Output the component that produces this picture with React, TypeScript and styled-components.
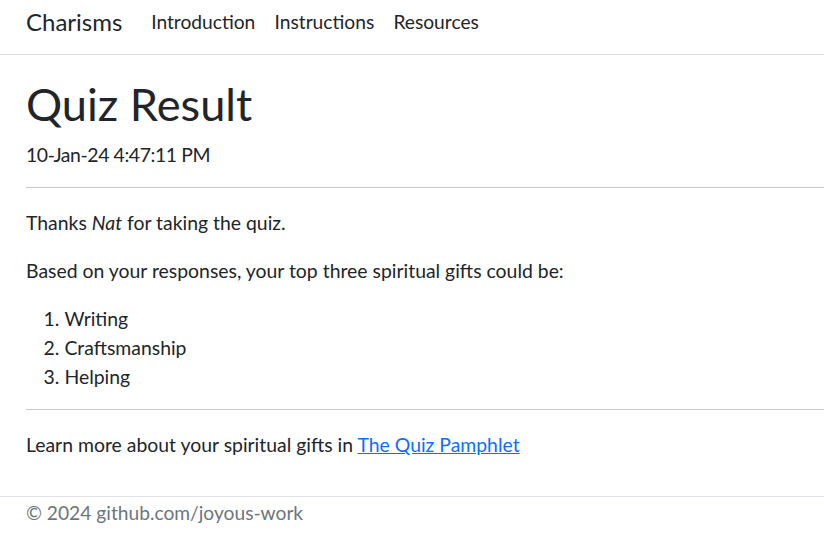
import React from "react";
import styled, { createGlobalStyle } from "styled-components";

const Global = createGlobalStyle`
  html, body { margin: 0; padding: 0; background: #fff; }
  body {
    font-family: Lato, "Noto Sans", sans-serif;
    color: #212529;
    font-size: 19.4px;
    line-height: 28.8px;
  }
`;

const Page = styled.div`
  display: flex;
  flex-direction: column;
  width: 824px;
  min-height: 556px;
`;

const NavBar = styled.nav`
  display: flex;
  align-items: center;
  padding: 4px 0 14px 26px;
  border-bottom: 1px solid #dee2e6;
`;

const Brand = styled.a`
  font-size: 24px;
  line-height: 36px;
  color: #212529;
  text-decoration: none;
  margin-right: 19.2px;
`;

const NavList = styled.ul`
  display: flex;
  list-style: none;
  margin: 0;
  padding: 0;
`;

const NavLink = styled.a`
  display: block;
  padding: 0 9.6px;
  font-size: 19.2px;
  line-height: 28.8px;
  color: #212529;
  text-decoration: none;
`;

const Main = styled.main`
  padding: 0 0 18.6px 26px;
`;

const Title = styled.h1`
  font-size: 45.2px;
  font-weight: 400;
  line-height: 55px;
  margin: 21px 0 10px;
`;

const Para = styled.p<{ $gap?: number }>`
  margin: 0 0 ${(p) => p.$gap ?? 19.2}px;
`;

const Stamp = styled(Para)`
  letter-spacing: -0.4px;
`;

const Rule = styled.hr`
  border: 0;
  border-top: 1px solid #c8c9ca;
  margin: 0;
`;

const Section = styled.section`
  padding: 20.6px 0 18px;
`;

const List = styled.ol`
  margin: 0;
  padding-left: 38.4px;
`;

const Link = styled.a`
  color: #0d6efd;
  text-decoration: underline;
`;

const Footer = styled.footer`
  border-top: 1px solid #dee2e6;
  padding: 2px 0 0 26px;
  color: #6c757d;
  font-size: 19.2px;
`;

export default function App() {
  return (
    <Page>
      <Global />
      <NavBar>
        <Brand href="#">Charisms</Brand>
        <NavList>
          <li><NavLink href="#">Introduction</NavLink></li>
          <li><NavLink href="#">Instructions</NavLink></li>
          <li><NavLink href="#">Resources</NavLink></li>
        </NavList>
      </NavBar>
      <Main>
        <Title>Quiz Result</Title>
        <Stamp $gap={17.6}>10-Jan-24 4:47:11 PM</Stamp>
        <Rule />
        <Section>
          <Para>
            Thanks <em>Nat</em> for taking the quiz.
          </Para>
          <Para>Based on your responses, your top three spiritual gifts could be:</Para>
          <List>
            <li>Writing</li>
            <li>Craftsmanship</li>
            <li>Helping</li>
          </List>
        </Section>
        <Rule />
        <Section>
          <Para $gap={0}>
            Learn more about your spiritual gifts in <Link href="#">The Quiz Pamphlet</Link>
          </Para>
        </Section>
      </Main>
      <Footer>© 2024 github.com/joyous-work</Footer>
    </Page>
  );
}
